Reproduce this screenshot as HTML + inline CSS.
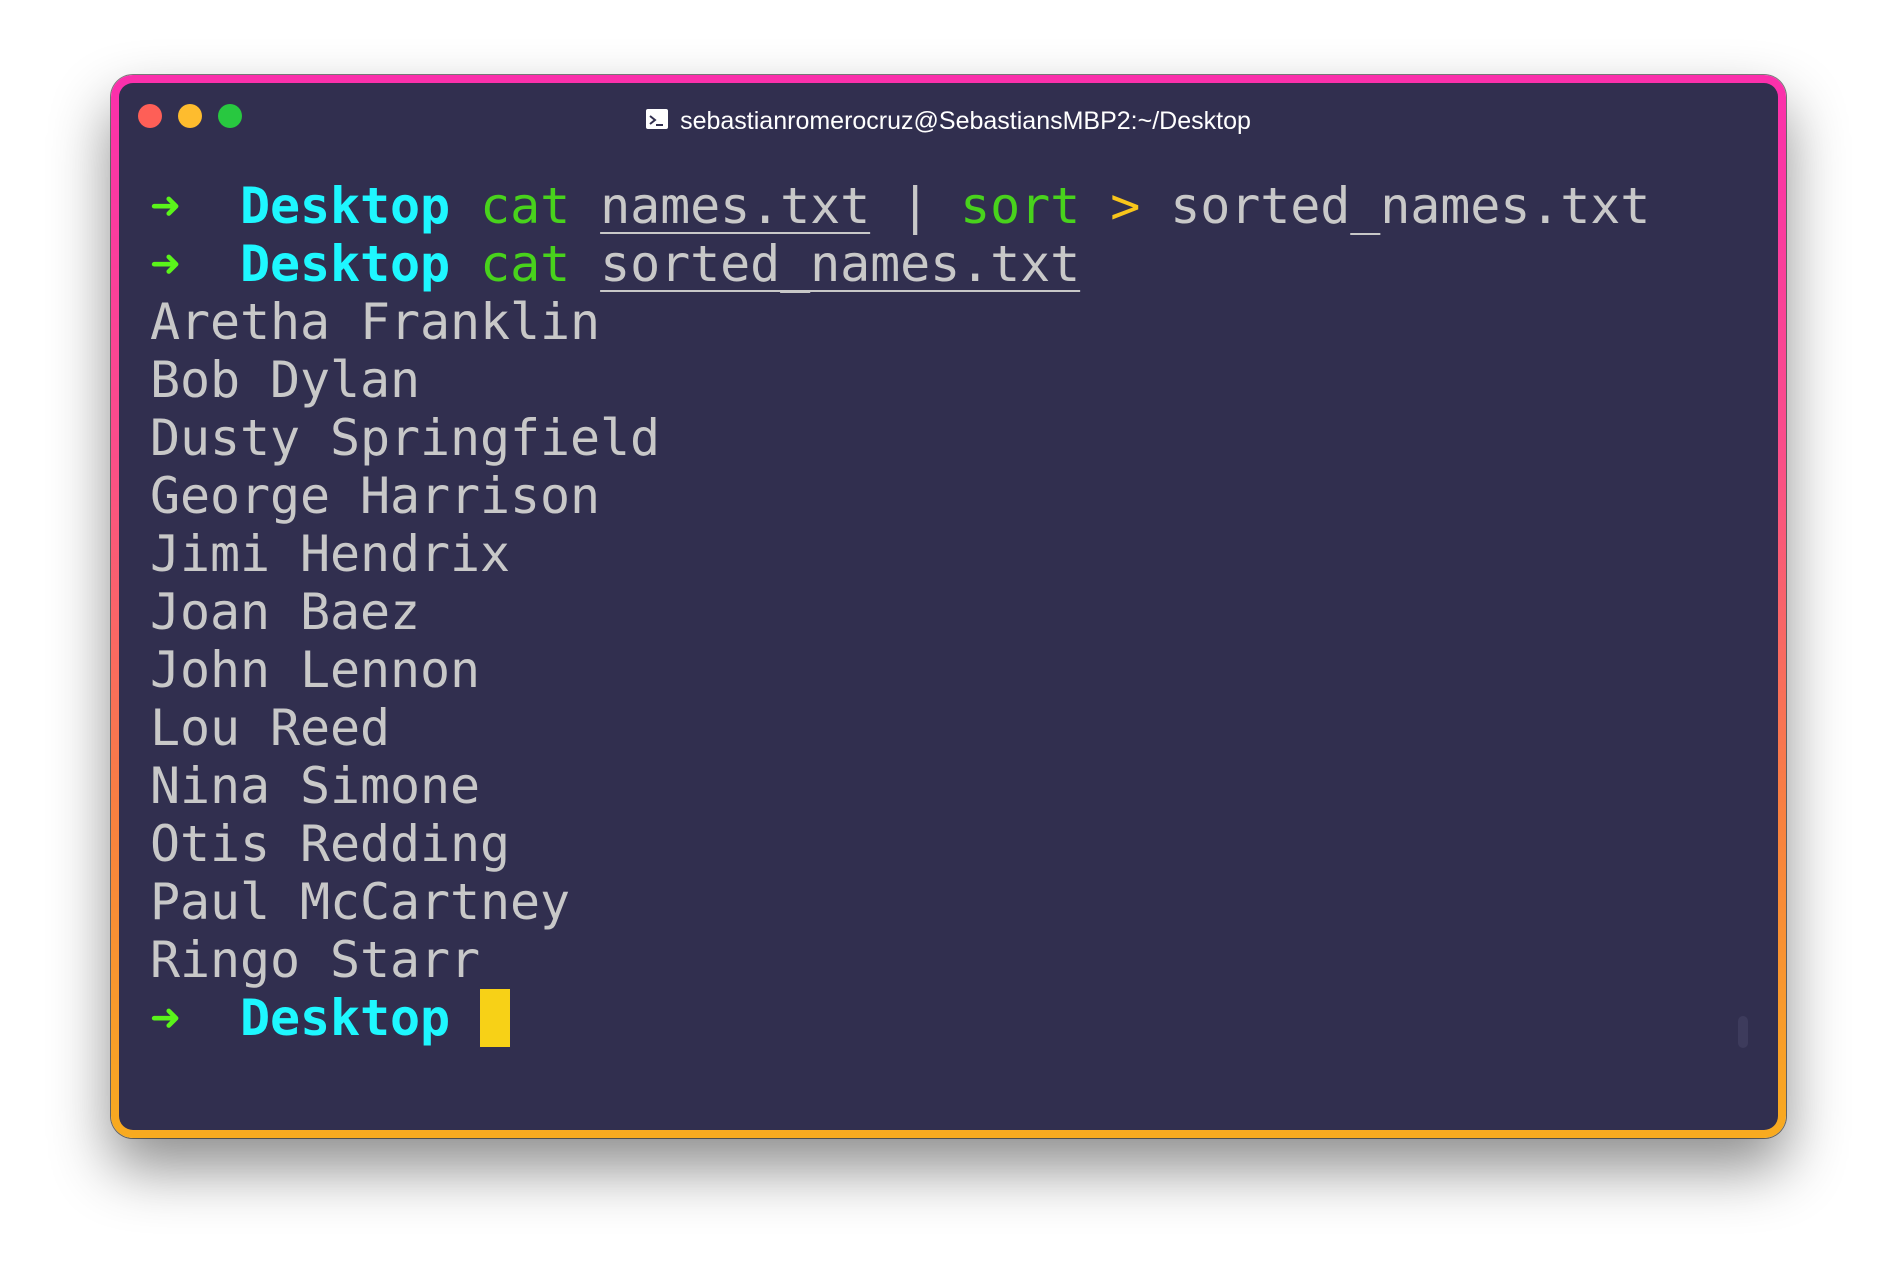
<!DOCTYPE html>
<html><head><meta charset="utf-8"><style>
html,body{margin:0;padding:0;background:#fff;width:1898px;height:1286px;overflow:hidden;position:relative}
.win{position:absolute;left:111px;top:75px;width:1675px;height:1063px;border-radius:22px;
background:linear-gradient(180deg,#fb2fac 0%,#fa4d8a 35%,#f8813f 70%,#f8ab1f 100%);
box-shadow:0 30px 60px rgba(0,0,0,0.45),0 0 0 1px rgba(0,0,0,0.5);}
.inner{position:absolute;left:8px;top:8px;right:8px;bottom:8px;background:#312f4f;border-radius:14px;overflow:hidden}
.dot{position:absolute;top:21px;width:24px;height:24px;border-radius:50%}
.title{position:absolute;left:0;right:0;top:24px;text-align:center;color:#fff;font:25px "Liberation Sans",sans-serif;}
.icon{display:inline-block;width:22px;height:20px;background:#fff;border-radius:2px;vertical-align:-2px;margin-right:12px;position:relative}
.term{position:absolute;left:31px;top:94px;font-family:"DejaVu Sans Mono",monospace;font-size:50px;line-height:58px;color:#c8c8c8;white-space:pre;letter-spacing:-0.1px}
.c{color:#1ef7ff;font-weight:bold}.g{color:#48d21c}.a{color:#5af41a;font-weight:bold}.y{color:#f8c51b}
.u{text-decoration:underline;text-decoration-thickness:2px;text-underline-offset:9px}
.cur{display:inline-block;width:30px;height:58px;background:#f7d117;vertical-align:top;margin-top:0}
.sb{position:absolute;left:1619px;top:933px;width:10px;height:32px;border-radius:5px;background:#3d3b5c}
</style></head><body>
<div class="win"><div class="inner">
<div class="dot" style="left:19px;background:#fe5f57"></div>
<div class="dot" style="left:59px;background:#febc2e"></div>
<div class="dot" style="left:99px;background:#28c840"></div>
<div class="title"><span class="icon"><svg width="22" height="20" viewBox="0 0 22 20"><path d="M4 5l5 4-5 4" stroke="#312f4f" stroke-width="2" fill="none"/><path d="M10 14h7" stroke="#312f4f" stroke-width="2"/></svg></span>sebastianromerocruz@SebastiansMBP2:~/Desktop</div>
<div class="term"><span class="a">➜</span>  <span class="c">Desktop</span> <span class="g">cat</span> <span class="u">names.txt</span> | <span class="g">sort</span> <span class="y">&gt;</span> sorted_names.txt
<span class="a">➜</span>  <span class="c">Desktop</span> <span class="g">cat</span> <span class="u">sorted_names.txt</span>
Aretha Franklin
Bob Dylan
Dusty Springfield
George Harrison
Jimi Hendrix
Joan Baez
John Lennon
Lou Reed
Nina Simone
Otis Redding
Paul McCartney
Ringo Starr
<span class="a">➜</span>  <span class="c">Desktop</span> <span class="cur"></span></div>
<div class="sb"></div>
</div></div>
</body></html>
